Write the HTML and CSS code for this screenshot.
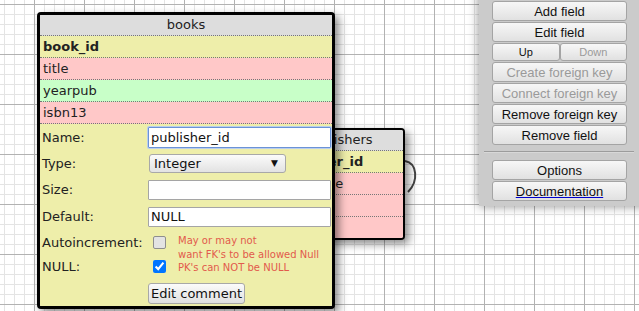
FILE: index.html
```html
<!DOCTYPE html>
<html lang="en">
<head>
    <meta charset="UTF-8">
    <meta name="viewport" content="width=device-width, initial-scale=1.0">
    <title>SQL Designer</title>
    <link rel="stylesheet" href="styles.css">
</head>
<body>
    <div class="area">
        <div class="table publishers">
            <div class="title">publishers</div>
            <div class="row numeric key">publisher_id</div>
            <div class="row char">homepage</div>
            <div class="row char">name</div>
            <div class="row char">country</div>
        </div>

        <svg class="relation" width="30" height="50" viewBox="0 0 30 50">
            <path d="M2 6 C14 8 16 26 5 37" fill="none" stroke="#444" stroke-width="2"/>
        </svg>

        <div class="table books selected">
            <div class="title">books</div>
            <div class="row numeric key">book_id</div>
            <div class="row char">title</div>
            <div class="row date">yearpub</div>
            <div class="row char">isbn13</div>
            <form class="rowform numeric">
                <label class="lbl r1" for="f-name">Name:</label>
                <input class="field focus r1" id="f-name" type="text" value="publisher_id">

                <label class="lbl r2" for="f-type">Type:</label>
                <div class="select-wrap r2">
                    <select id="f-type"><option>Integer</option></select>
                </div>

                <label class="lbl r3" for="f-size">Size:</label>
                <input class="field r3" id="f-size" type="text" value="">

                <label class="lbl r4" for="f-def">Default:</label>
                <input class="field r4" id="f-def" type="text" value="NULL">

                <label class="lbl r5" for="f-ai">Autoincrement:</label>
                <input class="check off r5" id="f-ai" type="checkbox">

                <label class="lbl r6" for="f-null">NULL:</label>
                <input class="check r6" id="f-null" type="checkbox" checked>

                <div class="note">May or may not<br>want FK's to be allowed Null<br>PK's can NOT be NULL</div>

                <div class="comment-cell">
                    <button type="button" class="comment">Edit comment</button>
                </div>
            </form>
        </div>

        <div class="controls">
            <button type="button">Add field</button>
            <button type="button">Edit field</button>
            <div class="updown">
                <button type="button">Up</button>
                <button type="button" disabled>Down</button>
            </div>
            <button type="button" disabled>Create foreign key</button>
            <button type="button" disabled>Connect foreign key</button>
            <button type="button">Remove foreign key</button>
            <button type="button">Remove field</button>
            <hr>
            <button type="button">Options</button>
            <button type="button" class="doc"><span>Documentation</span></button>
        </div>
    </div>
</body>
</html>
```

FILE: styles.css
```css
html, body {
    height: 100%;
}
body {
    margin: 0;
    overflow: hidden;
    font-family: "DejaVu Sans", sans-serif;
    font-size: 13px;
    color: #222;
    background-color: #fff;
    background-image:
        linear-gradient(to right, #b2b2b2 1px, transparent 1px),
        linear-gradient(to bottom, #b2b2b2 1px, transparent 1px),
        linear-gradient(to right, #e4e4e4 1px, transparent 1px),
        linear-gradient(to bottom, #e4e4e4 1px, transparent 1px);
    background-size: 50px 50px, 50px 50px, 10px 10px, 10px 10px;
    background-position: 34px 4px, 34px 4px, 4px 4px, 4px 4px;
}
.area {
    position: relative;
    width: 100%;
    height: 100%;
}

/* tables on the canvas */
.table {
    position: absolute;
    background: #fff;
    border: 2px solid #000;
    border-radius: 4px;
    overflow: hidden;
    box-shadow: 4px 4px 8px rgba(0, 0, 0, 0.45);
}
.table.selected {
    border-width: 3px;
}
.books {
    left: 37px;
    top: 12px;
    width: 292px;
    z-index: 2;
}
.publishers {
    left: 265px;
    top: 128px;
    width: 136px;
    z-index: 1;
}
.title {
    height: 20px;
    line-height: 20px;
    text-align: center;
    background: #ddd;
    border-bottom: 1px dotted #777;
}
.publishers .title {
    padding-left: 8px;
}
.row {
    height: 21px;
    line-height: 21px;
    padding-left: 3px;
    border-bottom: 1px dotted #777;
    white-space: nowrap;
}
.publishers .row {
    padding-left: 7px;
}
.publishers .row:last-child {
    border-bottom: none;
}
.key {
    font-weight: bold;
}
.numeric {
    background: rgb(238, 238, 170);
}
.char {
    background: rgb(255, 200, 200);
}
.date {
    background: rgb(200, 255, 200);
}

.relation {
    position: absolute;
    left: 403px;
    top: 155px;
}

/* row edit form */
.rowform {
    display: grid;
    grid-template-columns: 106px 30px 1fr;
    grid-template-rows: 26px 27px 25px 29px 22px 26px 27px;
    align-items: center;
    padding-left: 2px;
    height: 182px;
    box-sizing: border-box;
}
.lbl {
    grid-column: 1;
    white-space: nowrap;
}
.r1 { grid-row: 1; }
.r2 { grid-row: 2; }
.r3 { grid-row: 3; }
.r4 { grid-row: 4; }
.r5 { grid-row: 5; }
.r6 { grid-row: 6; }
.field {
    grid-column: 2 / 4;
    box-sizing: border-box;
    width: 183px;
    height: 20px;
    margin: 0;
    padding: 0 2px;
    border: 1px solid #a5a5a5;
    border-radius: 1px;
    background: #fff;
    font-family: "DejaVu Sans", sans-serif;
    font-size: 13px;
    color: #111;
}
.field.focus {
    height: 21px;
    border: 1px solid #6b93d6;
    box-shadow: 0 0 0 1px #b9cdee;
    outline: none;
}
.select-wrap {
    grid-column: 2 / 4;
    position: relative;
    width: 137px;
    height: 19px;
    margin-left: 1px;
}
.select-wrap select {
    appearance: none;
    -webkit-appearance: none;
    box-sizing: border-box;
    width: 100%;
    height: 19px;
    margin: 0;
    padding: 0 0 0 4px;
    border: 1px solid #a8a8a8;
    border-radius: 3px;
    background: linear-gradient(#fbfbfb, #e2e2e2);
    font-family: "DejaVu Sans", sans-serif;
    font-size: 13px;
    color: #111;
}
.select-wrap::after {
    content: "\25BC";
    position: absolute;
    right: 8px;
    top: 4px;
    font-size: 9px;
    line-height: 11px;
    color: #111;
    pointer-events: none;
}
.check {
    grid-column: 2;
    width: 13px;
    height: 13px;
    margin: 0 0 0 5px;
}
.check.off {
    appearance: none;
    -webkit-appearance: none;
    box-sizing: border-box;
    border: 1px solid #8e8e8e;
    border-radius: 2px;
    background: #e3e3e3;
}
.note {
    grid-column: 3;
    grid-row: 5 / 7;
    align-self: start;
    padding-top: 3px;
    font-size: 10px;
    line-height: 13.5px;
    color: #e25a4c;
    white-space: nowrap;
}
.comment-cell {
    grid-column: 2 / 4;
    grid-row: 7;
    align-self: start;
    padding-top: 4px;
}
.comment {
    height: 21px;
    width: 97px;
    padding: 0;
    border: 1px solid #a8a8a8;
    border-radius: 3px;
    background: linear-gradient(#fbfbfb, #e0e0e0);
    font-family: "DejaVu Sans", sans-serif;
    font-size: 13px;
    color: #111;
}

/* side panel */
.controls {
    position: absolute;
    left: 479px;
    top: -10px;
    width: 170px;
    height: 216px;
    box-sizing: border-box;
    padding: 11px 22px 0 13px;
    background: #cbcbcb;
    box-shadow: 0 0 10px rgba(0, 0, 0, 0.45);
    z-index: 3;
}
.controls button {
    display: block;
    box-sizing: border-box;
    width: 135px;
    height: 20px;
    margin: 0 0 1px 0;
    padding: 0;
    border: 1px solid #a4a4a4;
    border-radius: 3px;
    background: linear-gradient(#f7f7f7, #e1e1e1);
    font-family: "Liberation Sans", Arial, sans-serif;
    font-size: 13px;
    color: #111;
}
.controls button:disabled {
    color: #9a9a9a;
}
.updown {
    display: flex;
    width: 135px;
    margin-bottom: 1px;
}
.updown button {
    flex: 1;
    height: 18px;
    margin: 0;
    font-size: 11px;
}
.controls hr {
    margin: 6px -7px 7px -8px;
    border: none;
    border-top: 1px solid #9c9c9c;
    border-bottom: 1px solid #d8d8d8;
}
.doc span {
    text-decoration: underline;
    text-decoration-color: #0000cc;
}
```
